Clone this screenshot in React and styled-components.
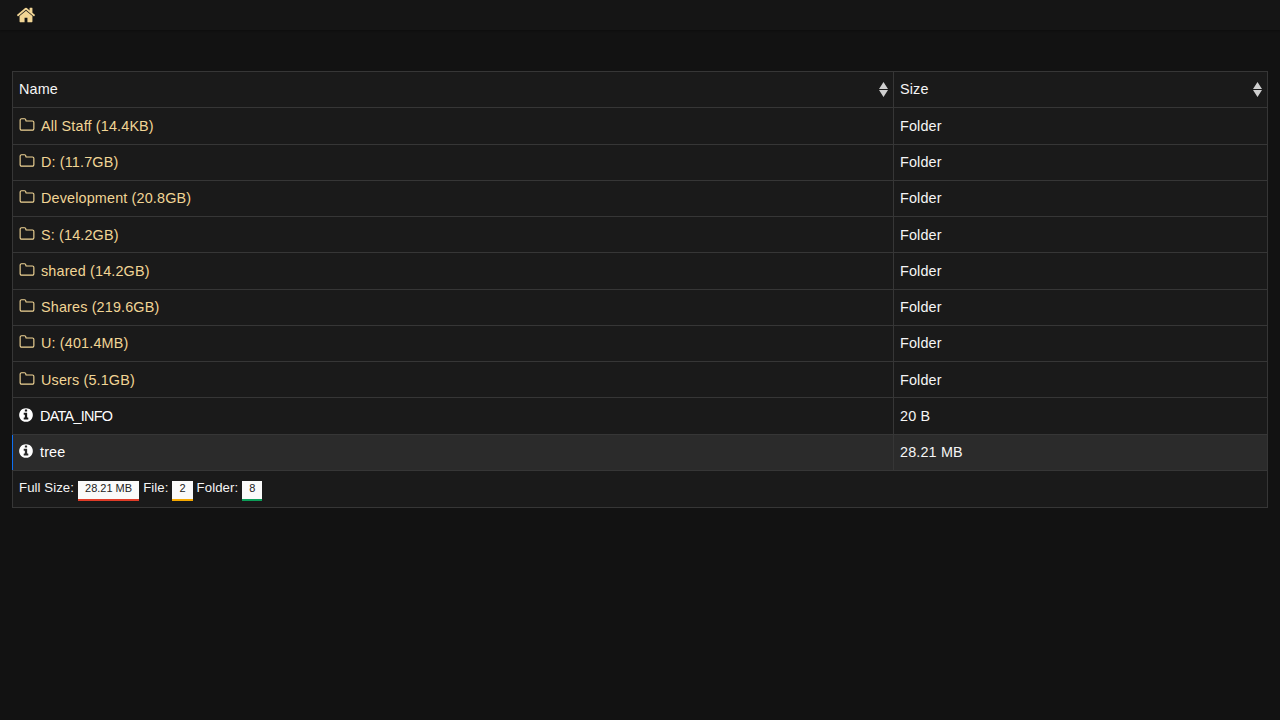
import React from 'react'
import styled, {createGlobalStyle} from "styled-components"

const COLORS = {
    page: "#121212",
    nav: "#151515",
    cell: "#1a1a1a",
    active: "#2b2b2b",
    line: "#363636",
    folder: "#f1d595",
    text: "#f5f5f5",
}

const FOLDERS = [
    "All Staff (14.4KB)",
    "D: (11.7GB)",
    "Development (20.8GB)",
    "S: (14.2GB)",
    "shared (14.2GB)",
    "Shares (219.6GB)",
    "U: (401.4MB)",
    "Users (5.1GB)",
]

const FILES = [
    {name: "DATA_INFO", size: "20 B", tight: true},
    {name: "tree", size: "28.21 MB", active: true},
]

// font awesome 4 shapes, the packaged ones have different strokes
const HOME = "M1472 992v480q0 26-19 45t-45 19h-384v-384h-256v384h-384q-26 0-45-19t-19-45v-480q0-1 .5-3t.5-3l575-474 575 474q1 2 1 6zm223-69l-62 74q-8 9-21 11h-3q-13 0-21-7l-692-577-692 577q-12 8-24 7-13-2-21-11l-62-74q-8-10-7-23.5t11-21.5l719-599q32-26 76-26t76 26l244 204v-195q0-14 9-23t23-9h192q14 0 23 9t9 23v408l219 182q10 8 11 21.5t-7 23.5z"
const FOLDER = "M1600 1312v-704q0-40-28-68t-68-28h-704q-40 0-68-28t-28-68v-64q0-40-28-68t-68-28h-320q-40 0-68 28t-28 68v960q0 40 28 68t68 28h1216q40 0 68-28t28-68zm128-704v704q0 92-66 158t-158 66h-1216q-92 0-158-66t-66-158v-960q0-92 66-158t158-66h320q92 0 158 66t66 158v32h672q92 0 158 66t66 158z"
const INFO = "M1152 1376v-160q0-14-9-23t-23-9h-96v-512q0-14-9-23t-23-9h-320q-14 0-23 9t-9 23v160q0 14 9 23t23 9h96v320h-96q-14 0-23 9t-9 23v160q0 14 9 23t23 9h448q14 0 23-9t9-23zm-128-896v-160q0-14-9-23t-23-9h-192q-14 0-23 9t-9 23v160q0 14 9 23t23 9h192q14 0 23-9t9-23zm640 416q0 209-103 385.5t-279.5 279.5-385.5 103-385.5-103-279.5-279.5-103-385.5 103-385.5 279.5-279.5 385.5-103 385.5 103 279.5 279.5 103 385.5z"

function Icon({d, size, color}) {
    return (
        <StyledIcon viewBox="0 0 1792 1792" $size={size} $color={color}>
            <path d={d} fill="currentColor" />
        </StyledIcon>
    )
}

function SortArrows() {
    return (
        <StyledSort viewBox="0 0 9 15">
            <path d="M4.5 0L9 7H0zM0 8h9l-4.5 7z" fill="#cfcfcf" />
        </StyledSort>
    )
}

function App() {
    return (
        <>
            <GlobalStyle />
            <Navbar>
                <Icon d={HOME} size={20} color={COLORS.folder} />
            </Navbar>
            <Main>
                <Table>
                    <colgroup>
                        <NameCol />
                        <col />
                    </colgroup>
                    <thead>
                        <tr>
                            <HeadCell>Name<SortArrows /></HeadCell>
                            <HeadCell>Size<SortArrows /></HeadCell>
                        </tr>
                    </thead>
                    <tbody>
                        {FOLDERS.map((name) => (
                            <tr key={name}>
                                <Cell>
                                    <FolderLink>
                                        <Icon d={FOLDER} size={16} color={COLORS.folder} />
                                        {name}
                                    </FolderLink>
                                </Cell>
                                <Cell>Folder</Cell>
                            </tr>
                        ))}
                        {FILES.map((file) => (
                            <tr key={file.name}>
                                <NameCell $active={file.active}>
                                    <FileName $tight={file.tight}>
                                        <Icon d={INFO} size={16} color="#fff" />
                                        {file.name}
                                    </FileName>
                                </NameCell>
                                <Cell $active={file.active}>{file.size}</Cell>
                            </tr>
                        ))}
                    </tbody>
                    <tfoot>
                        <tr>
                            <FootCell colSpan={2}>
                                <FootRow>
                                    Full Size: <Badge $color="#e03c28">28.21 MB</Badge>
                                    File: <Badge $color="#f5a800">2</Badge>
                                    Folder: <Badge $color="#0c9d58">8</Badge>
                                </FootRow>
                            </FootCell>
                        </tr>
                    </tfoot>
                </Table>
            </Main>
        </>
    )
}

const GlobalStyle = createGlobalStyle`
    html, body {
        margin: 0;
        height: 100%;
        background: ${COLORS.page};
        color: ${COLORS.text};
        font-family: "Liberation Sans", Arial, sans-serif;
        font-size: 14.4px;
        letter-spacing: 0.15px;
    }
`

const Navbar = styled.nav`
    display: flex;
    align-items: center;
    height: 30px;
    padding-left: 16px;
    background: ${COLORS.nav};
    box-shadow: 0 1px 2px rgba(0, 0, 0, 0.3);
`

const Main = styled.main`
    padding: 41px 12px 0;
`

const Table = styled.table`
    width: 100%;
    table-layout: fixed;
    border-collapse: collapse;
    background: ${COLORS.cell};
    border: 1px solid ${COLORS.line};
`

const NameCol = styled.col`
    width: 881px;
`

const Cell = styled.td`
    height: 36.25px;
    padding: 0 6px;
    box-sizing: border-box;
    border: 1px solid ${COLORS.line};
    background: ${(props) => props.$active ? COLORS.active : "transparent"};
    line-height: 20px;
    white-space: nowrap;
`

const NameCell = styled(Cell)`
    position: relative;

    &::before {
        content: "";
        display: ${(props) => props.$active ? "block" : "none"};
        position: absolute;
        top: 0;
        bottom: 0;
        left: -1px;
        width: 1px;
        background: #0f6ff0;
    }
`

const HeadCell = styled.th`
    position: relative;
    height: 36.25px;
    padding: 0 6px 2px;
    box-sizing: border-box;
    border: 1px solid ${COLORS.line};
    font-weight: 400;
    text-align: left;
`

const FootCell = styled.td`
    height: 37px;
    padding: 0 6px;
    box-sizing: border-box;
    border: 1px solid ${COLORS.line};
    font-size: 13.2px;
    letter-spacing: 0.08px;
`

const FootRow = styled.div`
    display: flex;
    align-items: flex-start;
    gap: 4px;
    padding-top: 1px;
    line-height: 20px;
`

const StyledIcon = styled.svg`
    display: inline-block;
    flex: none;
    width: ${(props) => props.$size}px;
    height: ${(props) => props.$size}px;
    color: ${(props) => props.$color};
`

const FolderLink = styled.span`
    display: flex;
    align-items: center;
    gap: 6px;
    color: ${COLORS.folder};

    ${StyledIcon} {
        margin-top: -2px;
    }
`

const FileName = styled.span`
    display: flex;
    align-items: center;
    gap: 6px;
    color: #fff;
    letter-spacing: ${(props) => props.$tight ? "-0.7px" : "inherit"};

    ${StyledIcon} {
        margin: -2px 0 0 -1px;
    }
`

const StyledSort = styled.svg`
    position: absolute;
    top: 10px;
    right: 5px;
    width: 9px;
    height: 15px;
`

const Badge = styled.span`
    display: inline-block;
    padding: 0 7px;
    height: 20px;
    line-height: 15px;
    box-sizing: border-box;
    margin-top: 3px;
    background: #fafafa;
    color: #222;
    font-size: 11px;
    letter-spacing: 0;
    border-bottom: 2px solid ${(props) => props.$color};
`

export default App
